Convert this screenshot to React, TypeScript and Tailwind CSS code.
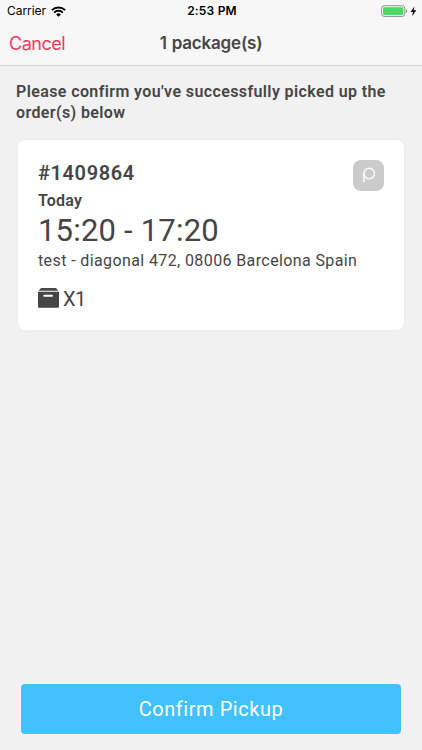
function WifiIcon() {
  return (
    <svg width="15" height="11" viewBox="0 0 15 11" fill="none" stroke="#000" strokeWidth="2">
      <path d="M0.9 4.1a9.4 9.4 0 0 1 13.2 0" />
      <path d="M3.2 6.6a6.1 6.1 0 0 1 8.6 0" />
      <path d="M7.5 10.7 5.1 8.4a3.4 3.4 0 0 1 4.8 0z" fill="#000" stroke="none" />
    </svg>
  )
}

function BatteryIcon() {
  return (
    <svg width="36" height="13" viewBox="0 0 36 13">
      <rect x="0.6" y="0.8" width="23.2" height="10.6" rx="2.6" fill="#fff" stroke="#8c8c8c" />
      <rect x="2" y="2.2" width="20.4" height="7.8" rx="1.2" fill="#4cd964" />
      <path d="M25 4.2c1.7.5 1.7 3.3 0 3.8z" fill="#8c8c8c" />
      <path d="M33.3 1.4 29.6 6.9h2.5l-1.1 4.4 4.3-6h-2.6z" fill="#000" />
    </svg>
  )
}

function BrandBadge() {
  return (
    <div className="h-[31px] w-[31px] rounded-lg bg-[#cbcbcb]">
      <svg width="31" height="31" viewBox="0 0 31 31" fill="none" stroke="#fff" strokeWidth="1.4">
        <circle cx="16.2" cy="13.6" r="5.3" />
        <path d="M10.9 22.3v-8.7" />
      </svg>
    </div>
  )
}

function PackageIcon() {
  return (
    <svg width="21" height="20" viewBox="0 0 21 20" fill="#464646">
      <path d="M3 0h15l2.3 2.8H.7z" />
      <path d="M0 3.7h21v15.1a1 1 0 0 1-1 1H1a1 1 0 0 1-1-1z" />
      <rect x="5.3" y="6.7" width="9.6" height="2" rx="0.8" fill="#fff" />
    </svg>
  )
}

function StatusBar() {
  return (
    <div className="grid h-[22px] grid-cols-3 items-center pl-[7px] pr-[5px] text-black">
      <div className="flex items-center gap-[5px] text-[12px] leading-[22px]">
        <span className="tracking-[-0.05px]">Carrier</span>
        <WifiIcon />
      </div>
      <div className="text-center text-[12px] font-semibold tracking-[0.2px]">2:53 PM</div>
      <div className="flex justify-end">
        <BatteryIcon />
      </div>
    </div>
  )
}

function NavBar({ title }: { title: string }) {
  return (
    <div className="grid h-[43px] grid-cols-[1fr_auto_1fr] items-center px-[9px]">
      <button className="text-left text-[18px] tracking-[-0.5px] text-[#ee3c5d]">Cancel</button>
      <h1 className="text-[17px] font-semibold tracking-[-0.2px] text-[#464646] [word-spacing:1px]">
        {title}
      </h1>
    </div>
  )
}

type Order = {
  id: string
  day: string
  slot: string
  address: string
  packages: number
}

function OrderCard({ order }: { order: Order }) {
  return (
    <div className="mx-[17px] mt-4 h-[192px] rounded-lg border border-[#ececec] bg-white px-5 pt-5">
      <div className="flex h-[52px] items-start justify-between">
        <div>
          <h2 className="text-[20px] font-semibold leading-[26px] tracking-[0.6px]">#{order.id}</h2>
          <p className="mt-1 text-[16px] font-semibold leading-[22px] tracking-[0.2px]">{order.day}</p>
        </div>
        <BrandBadge />
      </div>
      <p className="mt-[1px] text-[31px] leading-[36px] tracking-[0.2px]">{order.slot}</p>
      <p className="mt-[1px] whitespace-nowrap text-[16px] leading-[22px] tracking-[0.39px]">
        {order.address}
      </p>
      <div className="mt-4 flex items-start gap-1 text-[20px] leading-[22px]">
        <PackageIcon />
        <span className="tracking-[-0.5px]">X{order.packages}</span>
      </div>
    </div>
  )
}

const order: Order = {
  id: '1409864',
  day: 'Today',
  slot: '15:20 - 17:20',
  address: 'test - diagonal 472, 08006 Barcelona Spain',
  packages: 1,
}

export default function App() {
  return (
    <div className="flex h-[750px] w-[422px] flex-col bg-[#f1f1f1] font-['Roboto',sans-serif] text-[#464646]">
      <header className="border-b border-[#d4d4d4] bg-[#f7f7f7] font-['Inter',sans-serif]">
        <StatusBar />
        <NavBar title={`${order.packages} package(s)`} />
      </header>

      <main className="flex-1">
        <p className="pl-4 pt-[15px] text-[16px] font-semibold leading-[21px] tracking-[0.39px]">
          Please confirm you've successfully picked up the
          <br />
          order(s) below
        </p>
        <OrderCard order={order} />
      </main>

      <footer className="px-[21px] pb-4">
        <button className="h-[50px] w-full rounded bg-[#42c1ff] text-[20px] tracking-[0.55px] text-white">
          Confirm Pickup
        </button>
      </footer>
    </div>
  )
}
